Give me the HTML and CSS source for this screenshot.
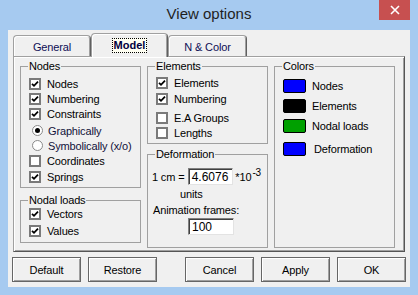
FILE: index.html
```html
<!DOCTYPE html>
<html>
<head>
<meta charset="utf-8">
<title>View options</title>
<link rel="stylesheet" href="styles.css">
</head>
<body>
<div class="window">
  <div class="titlebar">
    <span></span>
    <span class="title">View options</span>
    <span class="close-wrap">
      <span class="close">
        <svg width="10" height="10" viewBox="0 0 10 10"><path d="M1 1 L9 9 M9 1 L1 9" stroke="#fff" stroke-width="1.6" fill="none"/></svg>
      </span>
    </span>
  </div>
  <div class="client">
    <div class="tabs">
      <div class="tab tab-general">General</div>
      <div class="tab tab-model active"><span class="focus">Model</span></div>
      <div class="tab tab-color">N &amp; Color</div>
    </div>
    <div class="panel">
      <div class="col">
        <fieldset class="group g-nodes">
          <legend>Nodes</legend>
          <div class="row"><span class="cb on"><svg viewBox="0 0 8 8"><polyline points="1,3.8 3,5.8 7,1.6" /></svg></span>Nodes</div>
          <div class="row"><span class="cb on"><svg viewBox="0 0 8 8"><polyline points="1,3.8 3,5.8 7,1.6" /></svg></span>Numbering</div>
          <div class="row"><span class="cb on"><svg viewBox="0 0 8 8"><polyline points="1,3.8 3,5.8 7,1.6" /></svg></span>Constraints</div>
          <div class="row radio-row first-radio"><span class="rb on"></span><span class="rlabel">Graphically</span></div>
          <div class="row radio-row"><span class="rb"></span><span class="rlabel">Symbolically (x/o)</span></div>
          <div class="row"><span class="cb"></span>Coordinates</div>
          <div class="row springs"><span class="cb on"><svg viewBox="0 0 8 8"><polyline points="1,3.8 3,5.8 7,1.6" /></svg></span>Springs</div>
        </fieldset>
        <fieldset class="group g-loads">
          <legend>Nodal loads</legend>
          <div class="loads-list">
            <div class="row r17"><span class="cb on"><svg viewBox="0 0 8 8"><polyline points="1,3.8 3,5.8 7,1.6" /></svg></span>Vectors</div>
            <div class="row r17"><span class="cb on"><svg viewBox="0 0 8 8"><polyline points="1,3.8 3,5.8 7,1.6" /></svg></span>Values</div>
          </div>
        </fieldset>
      </div>
      <div class="col">
        <fieldset class="group g-elements">
          <legend>Elements</legend>
          <div class="row r16"><span class="cb on"><svg viewBox="0 0 8 8"><polyline points="1,3.8 3,5.8 7,1.6" /></svg></span>Elements</div>
          <div class="row r16"><span class="cb on"><svg viewBox="0 0 8 8"><polyline points="1,3.8 3,5.8 7,1.6" /></svg></span>Numbering</div>
          <div class="row r16 ea"><span class="cb"></span>E.A Groups</div>
          <div class="row r16 lengths"><span class="cb"></span>Lengths</div>
        </fieldset>
        <fieldset class="group g-deform">
          <legend>Deformation</legend>
          <div class="cm-row">
            <span class="cm-label">1 cm =</span>
            <span class="field">4.6076</span>
            <span class="exp">*10<sup>-3</sup></span>
          </div>
          <div class="units">units</div>
          <div class="anim">Animation frames:</div>
          <span class="field field2">100</span>
        </fieldset>
      </div>
      <fieldset class="group g-colors">
        <legend>Colors</legend>
        <div class="crow"><span class="swatch blue"></span>Nodes</div>
        <div class="crow"><span class="swatch black"></span>Elements</div>
        <div class="crow"><span class="swatch green"></span>Nodal loads</div>
        <div class="crow deform-row"><span class="swatch blue"></span><span class="dlabel">Deformation</span></div>
      </fieldset>
    </div>
    <div class="buttons">
      <button class="btn">Default</button>
      <button class="btn">Restore</button>
      <span class="spacer"></span>
      <button class="btn">Cancel</button>
      <button class="btn">Apply</button>
      <button class="btn">OK</button>
    </div>
  </div>
</div>
</body>
</html>
```

FILE: styles.css
```css
html, body {
  margin: 0;
  padding: 0;
}
body {
  background: #a6caf0;
  font-family: "Liberation Sans", Arial, sans-serif;
  font-size: 11px;
  letter-spacing: -0.15px;
  color: #000;
}
.window {
  width: 418px;
  height: 295px;
  background: #a6caf0;
  display: flex;
  flex-direction: column;
}
.titlebar {
  height: 30px;
  display: grid;
  grid-template-columns: 1fr auto 1fr;
  align-items: start;
  flex: none;
}
.title {
  font-size: 15px;
  line-height: 15px;
  margin-top: 6px;
  color: #1f1f1f;
  letter-spacing: 0;
}
.close-wrap {
  justify-self: end;
  margin-right: 8px;
}
.close {
  width: 31px;
  height: 20px;
  background: #c75050;
  display: flex;
  align-items: center;
  justify-content: center;
}
.close svg { display: block; }

.client {
  margin: 0 8px;
  height: 257px;
  background: #f0f0f0;
  padding: 3px 5px 5px;
  box-sizing: border-box;
  display: flex;
  flex-direction: column;
}

/* tabs */
.tabs {
  display: flex;
  align-items: flex-end;
  height: 23px;
  flex: none;
}
.tab {
  height: 21px;
  box-sizing: border-box;
  background: #f0f0f0;
  border-top: 1px solid #a0a0a0;
  border-left: 1px solid #a0a0a0;
  border-right: 1px solid #606060;
  border-radius: 4px 4px 0 0;
  box-shadow: inset 1px 1px 0 #fff, inset -1px 0 0 #a0a0a0;
  display: flex;
  align-items: center;
  justify-content: center;
  color: #0e0e55;
  padding-top: 1px;
}
.tab-general { width: 78px; }
.tab-model { width: 77px; }
.tab-color { width: 79px; }
.tab.active {
  height: 24px;
  margin-bottom: -1px;
  position: relative;
  z-index: 1;
  padding-top: 0;
}
.focus {
  font-weight: bold;
  color: #000040;
  border: 1px dotted #000;
  background: #fffff2;
  padding: 0 1px;
  line-height: 13px;
  letter-spacing: 0;
}

/* panel */
.panel {
  height: 196px;
  box-sizing: border-box;
  border-top: 1px solid #a0a0a0;
  border-left: 1px solid #a0a0a0;
  border-right: 1px solid #555;
  border-bottom: 1px solid #555;
  box-shadow: inset 1px 1px 0 #fff, inset -1px -1px 0 #a0a0a0;
  padding: 3px 0 0 6px;
  display: grid;
  grid-template-columns: 121px 121px 121px;
  column-gap: 6px;
  align-items: start;
}
.col {
  display: flex;
  flex-direction: column;
}
.group {
  margin: 0;
  padding: 0 6px 0 8px;
  border: 1px solid #a0a0a0;
  box-sizing: border-box;
  min-width: 0;
}
legend {
  padding: 0 1px;
  margin-left: -1px;
  line-height: 13px;
  font-size: 11px;
}
.g-nodes { height: 128px; padding-top: 3px; }
.g-loads { height: 49px; margin-top: 6px; }
.g-elements { height: 84px; padding-top: 2px; }
.g-deform { height: 100px; margin-top: 4px; }
.g-colors { height: 188px; padding-top: 3px; }

.row {
  display: flex;
  align-items: center;
  height: 15px;
  white-space: nowrap;
}
.r16 { height: 16px; }
.r17 { height: 16px; margin-bottom: 1px; }
.loads-list { margin-top: -1px; }
.first-radio { margin-top: 2px; }
.springs { margin-top: 1px; }
.ea { margin-top: 3px; }
.lengths { margin-top: -1px; }

.cb {
  width: 12px;
  height: 12px;
  box-sizing: border-box;
  border: 2px solid #7a7a7a;
  background: #fff;
  margin-right: 6px;
  flex: none;
  display: flex;
  align-items: center;
  justify-content: center;
}
.cb svg {
  width: 8px;
  height: 8px;
  display: block;
}
.cb polyline {
  fill: none;
  stroke: #000;
  stroke-width: 1.8;
}
.radio-row { padding-left: 3px; }
.rb {
  width: 11px;
  height: 11px;
  box-sizing: border-box;
  border-radius: 50%;
  border: 1px solid #8a8a8a;
  background: #fff;
  margin-right: 5px;
  flex: none;
  display: flex;
  align-items: center;
  justify-content: center;
}
.rb.on::after {
  content: "";
  width: 5px;
  height: 5px;
  border-radius: 50%;
  background: #000;
}
.rlabel { color: #12123a; }

/* deformation */
.cm-row {
  display: flex;
  align-items: center;
  height: 17px;
  margin-top: 7px;
  margin-left: -4px;
  white-space: nowrap;
}
.cm-label { width: 36px; }
.field {
  display: inline-block;
  width: 46px;
  height: 17px;
  box-sizing: border-box;
  background: #fff;
  border-style: solid;
  border-width: 1px;
  border-color: #808080 #e3e3e3 #e3e3e3 #808080;
  box-shadow: inset 1px 1px 0 #404040;
  padding: 1px 0 0 3px;
  line-height: 14px;
  font-size: 12px;
  letter-spacing: 0;
}
.exp {
  margin-left: 2px;
  position: relative;
  font-size: 11px;
}
.exp sup {
  font-size: 10px;
  vertical-align: 5px;
  line-height: 0;
  margin-left: 1px;
}
.units {
  margin-top: 3px;
  margin-left: 24px;
  line-height: 13px;
}
.anim {
  margin-top: 3px;
  margin-left: -3px;
  line-height: 13px;
  white-space: nowrap;
}
.field2 {
  margin-top: 1px;
  margin-left: 32px;
  display: block;
}

/* colors */
.crow {
  display: flex;
  align-items: center;
  height: 20px;
  white-space: nowrap;
}
.deform-row { margin-top: 3px; }
.dlabel { margin-left: 2px; }
.swatch {
  width: 23px;
  height: 14px;
  box-sizing: border-box;
  border: 1px solid #000;
  border-radius: 2px;
  margin-right: 6px;
  flex: none;
}
.swatch.blue { background: #0000ff; }
.swatch.black { background: #000; }
.swatch.green { background: #00a000; }

/* buttons */
.buttons {
  display: flex;
  gap: 7px;
  margin: 5px -1px 0 -1px;
  height: 25px;
  flex: none;
}
.spacer { flex: 1; }
.btn {
  width: 69px;
  height: 25px;
  margin: 0;
  padding: 0;
  box-sizing: border-box;
  background: #f0f0f0;
  border: 1px solid #666;
  box-shadow: inset 1px 1px 0 #fff, inset -1px -1px 0 #a0a0a0;
  font-family: "Liberation Sans", Arial, sans-serif;
  font-size: 11px;
  letter-spacing: -0.15px;
  color: #000;
}
```
